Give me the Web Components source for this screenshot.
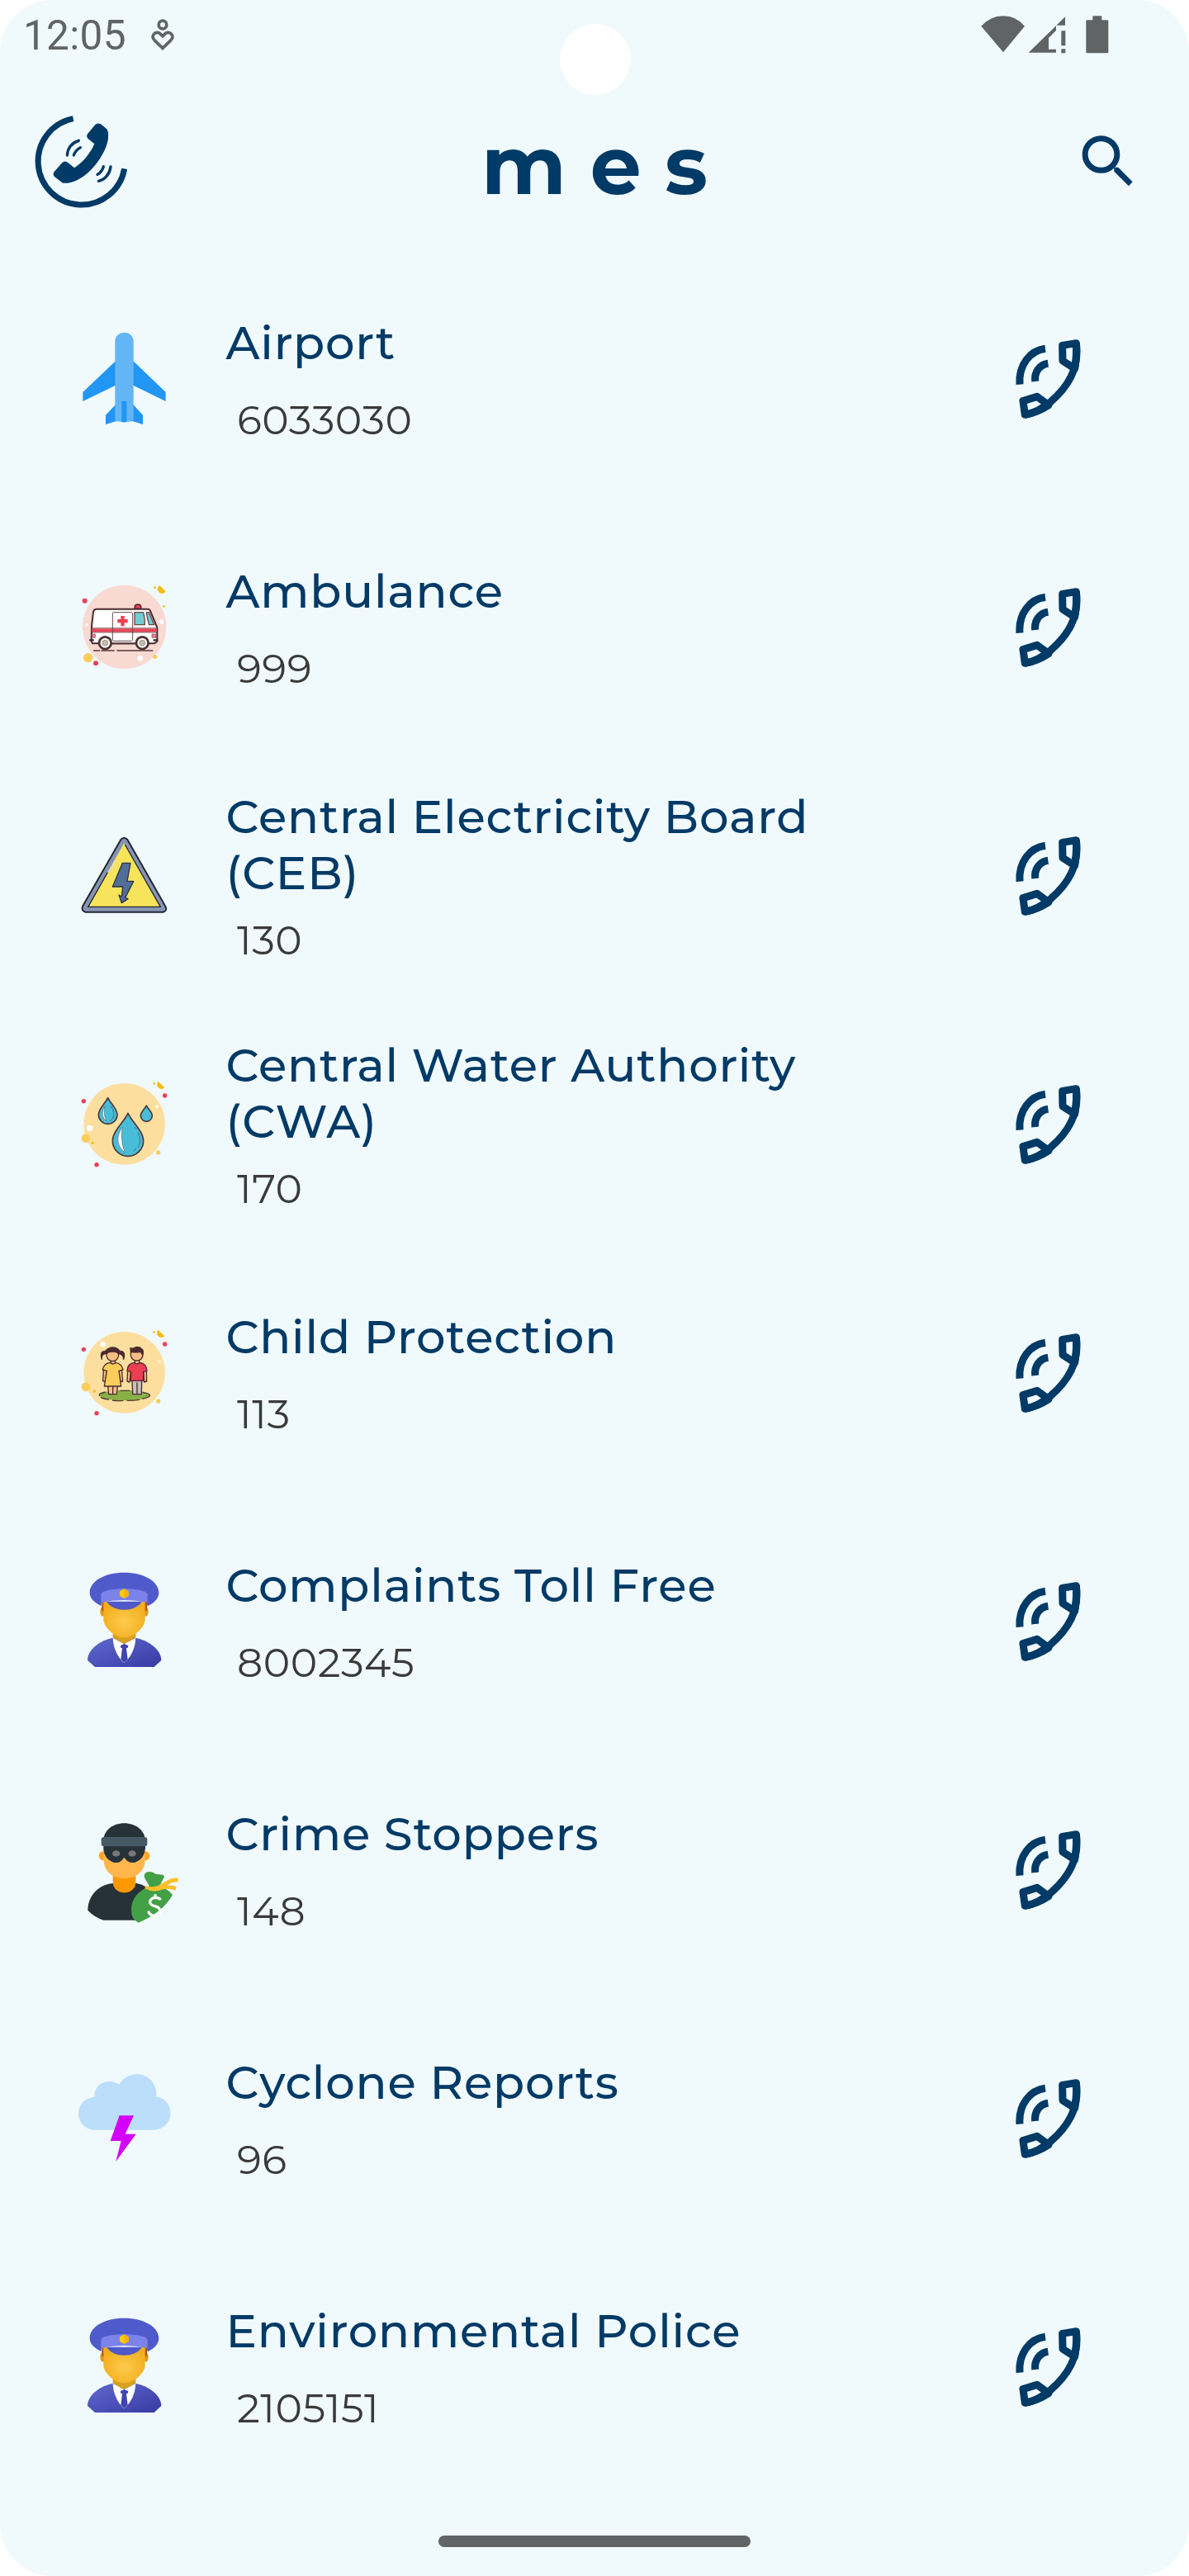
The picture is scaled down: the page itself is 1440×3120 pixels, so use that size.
<!DOCTYPE html>
<html lang="en">
<head>
<meta charset="utf-8">
<title>mes</title>
<style>
html,body{margin:0;background:#fff}
body{font-family:Montserrat,Inter,"Open Sans",sans-serif}
</style>
</head>
<body>
<mes-app></mes-app>
<script>
const NAVY='#003a66';
const dot=(x,y,r,c)=>`<circle cx="${x}" cy="${y}" r="${r}" fill="${c}"/>`;
const officer=`<defs><radialGradient id="f" cx=".5" cy=".55" r=".55"><stop offset="0" stop-color="#ffca4d"/><stop offset="1" stop-color="#f2b01f"/></radialGradient><linearGradient id="b" x1="0" y1="0" x2="1" y2="1"><stop offset="0" stop-color="#6069cd"/><stop offset="1" stop-color="#373ba5"/></linearGradient></defs>
<path d="M170 281C125 290 78 322 78 363L105 387H320L346 363C346 322 297 290 253 281Z" fill="url(#b)"/>
<path d="M170 281L211 303L253 281C252 320 233 355 211 372C190 355 171 320 170 281Z" fill="#fff"/>
<path d="M198 309L211 303L226 309L224 318H219L224 360L211 371L199 360L204 318H199Z" fill="#3f44ae"/>
<path d="M170 260H253V280Q234 293 211 303Q189 293 170 280Z" fill="#d8a01c"/>
<ellipse cx="133" cy="186" rx="9" ry="17" fill="#d99a18"/><ellipse cx="290" cy="186" rx="9" ry="17" fill="#d99a18"/>
<path d="M130 145H145V178L136 186L130 180ZM278 145H294V180L288 186L278 165Z" fill="#bf4f16"/>
<path d="M136 150H287V215C287 240 249 280 211 280C174 280 136 240 136 215Z" fill="url(#f)"/>
<path d="M127 165C98 150 86 135 86 117C86 75 140 44 211 44S337 75 337 117C337 135 325 152 296 166L290 140H132Z" fill="#4f5acb"/>
<path d="M147 149H276C263 169 239 179 211 179S160 169 147 149Z" fill="#5059c8"/>
<path d="M127 123C127 110 170 103 211 103S296 110 296 123V153Q254 144 211 144T127 153Z" fill="#7b83eb"/>
<path d="M211 103L227 112V129L211 138L195 129V112Z" fill="#fcca05"/><path d="M211 103L227 112V129L211 138Z" fill="#f5b400"/>`;
const drop=(x,t,b,w)=>{const h=b-t;return `M${x} ${t}C${x-w*.25} ${t+h*.2} ${x-w} ${t+h*.42} ${x-w} ${b-w}A${w} ${w} 0 0 0 ${x+w} ${b-w}C${x+w} ${t+h*.42} ${x+w*.25} ${t+h*.2} ${x} ${t}Z`};
const ICONS={
airport:['30 42 450 450',`<path d="M210 202L91 315V348L210 290H274L392 348V315L274 202ZM210 360L174 398V432L210 421H274L309 432V398L274 360Z" fill="#2196f3"/><path d="M208 131C208 110 224 98 241.500 98S275 110 275 131V418Q241 429 208 418Z" fill="#64b5f6"/><path d="M232 348H250V424H232Z" fill="#2196f3"/>`],
ambulance:['0 15 450 450',dot(212,238,152,'#f8dad2')+dot(68,143,9,'#ee3e54')+dot(76,230,5,'#fff')+dot(80,350,17,'#fbcd59')+dot(108,370,9,'#ee3e54')+dot(269,352,10,'#fff')+dot(323,346,8,'#fbcd59')+dot(347,219,8,'#fff')+dot(355,163,4,'#f4bc1a')+dot(323,95,4,'#f4bc1a')+
`<path d="M340 87L362 109A16 16 0 1 1 340 87Z" fill="#f4bc1a"/>
<path d="M101 324H122M129 324H174M186 324H314" stroke="#56373b" stroke-width="5" stroke-linecap="round"/>
<path d="M250 172V165Q250 156 261 156T272 165V172Z" fill="#ee3e54" stroke="#4b2b2f" stroke-width="5"/>
<path d="M110 173H299Q304 174 306 180L331 240V290L322 298H96L92 290L93 235L99 183Q101 174 110 173Z" fill="#fff" stroke="#4b2b2f" stroke-width="6" stroke-linejoin="round"/>
<path d="M94 244H330V257H94Z" fill="#e7485c"/><path d="M96 242H329M96 258H329" stroke="#5b3035" stroke-width="2"/>
<path d="M249 185H280Q287 202 286 230H249Z" fill="#74cbd2" stroke="#6d484a" stroke-width="4"/><path d="M292 185H301L320 230H302Q295 210 292 185Z" fill="#74cbd2" stroke="#6d484a" stroke-width="4"/>
<path d="M171 185H239L242 188V286L239 289H171L169 286V188Z" fill="none" stroke="#694b4d" stroke-width="3"/>
<path d="M199 198H212V210H224V223H212V235H199V223H187V210H199Z" fill="#ee3e54"/>
<path d="M94 264H106V277H94ZM312 264H327V277H312Z" fill="#f17f91" stroke="#734b52" stroke-width="2"/>
<path d="M85 286H101M317 286H334" stroke="#35252a" stroke-width="7"/><path d="M166 301H252" stroke="#8e7a79" stroke-width="3"/>`+[142,277].map(x=>dot(x,296,26,'#493033')+dot(x,296,18,'#f7f3ef')+`<circle cx="${x}" cy="296" r="10" fill="#c7beaf" stroke="#837a70" stroke-width="2"/>`).join('')],
power:['0 -12 450 450',`<path d="M199 81Q211 67 223 81L361 323Q369 339 352 344H71Q55 340 60 323Z" fill="#8795b3" stroke="#242834" stroke-width="6" stroke-linejoin="round"/><path d="M211 94L343 325H80Z" fill="#f8e45b"/><path d="M214 99L343 325H80L151 200" fill="none" stroke="#242834" stroke-width="4"/><path d="M153 199L166 189L173 164L184 154" stroke="#ddd" stroke-width="4" fill="none"/><path d="M205 166H234L222 232H245L215 292L225 296L202 311L192 282L202 288L206 252H169Z" fill="#536d99" stroke="#293345" stroke-width="4" stroke-linejoin="round"/>`],
water:['0 -9 450 450',dot(212,214,148,'#fcdf9f')+dot(64,131,8,'#ee3e54')+dot(359,111,8,'#ee3e54')+dot(111,362,8,'#ee3e54')+dot(86,229,11,'#fff')+dot(72,266,16,'#fbcd59')+dot(96,283,5,'#f4bc1a')+dot(335,318,8,'#fbcd59')+dot(331,151,5,'#fff')+dot(320,67,4,'#f4bc1a')+`<path d="M335 59L358 82A15 15 0 1 1 335 59Z" fill="#f4bc1a"/><g fill="#49bcd8" stroke="#4a383b" stroke-width="5" stroke-linejoin="round"><path d="${drop(152,119,214,34)}"/><path d="${drop(292,147,205,21)}"/><path d="${drop(225,175,331,56)}"/></g><path d="M141 149Q125 174 138 196L147 202Q134 181 141 149ZM205 226C182 257 182 295 215 318C203 294 199 260 205 226Z" fill="#fff" stroke="#5a6970" stroke-width="2"/><path d="M163 148Q180 175 168 196L159 203M249 225L257 233M262 245Q275 276 262 300M255 301L246 313" fill="none" stroke="#45717c" stroke-width="3"/>`],
child:['0 -6 450 450',dot(212,217,148,'#fcdf9f')+dot(64,133,8,'#ee3e54')+dot(359,114,8,'#ee3e54')+dot(111,365,8,'#ee3e54')+dot(134,115,10,'#fff')+dot(72,269,16,'#fbcd59')+dot(103,285,5,'#f4bc1a')+dot(335,321,8,'#fbcd59')+dot(339,178,4,'#fff')+dot(320,70,4,'#f4bc1a')+`<path d="M335 62L358 85A15 15 0 1 1 335 62Z" fill="#f4bc1a"/><ellipse cx="213" cy="300" rx="92" ry="19" fill="#88b047"/><path d="M144 288Q115 294 122 302M126 307Q136 313 156 315M168 318Q190 321 208 319M221 319Q247 319 267 316M277 313Q300 308 305 301Q306 294 278 289M196 283H232" fill="none" stroke="#4c382d" stroke-width="4"/>
<g stroke="#4b2b2f" stroke-width="4" stroke-linejoin="round"><path d="M152 265H187L184 296H155Z" fill="#f7bd87"/><path d="M170 267V294"/><path d="M136 207L134 248L143 251L149 207ZM202 207L206 249L198 251L190 207Z" fill="#f7bd87"/><path d="M161 181Q138 182 133 207L148 211L139 267H200L192 211L207 207Q202 184 179 181Q170 188 161 181Z" fill="#fbcd59"/><path d="M163 170V183Q170 189 178 183V170Z" fill="#f7bd87"/><ellipse cx="169" cy="154" rx="22" ry="22" fill="#f7bd87"/><path d="M148 149Q127 148 130 169Q121 139 143 139Q155 126 170 126T195 139Q218 138 209 169Q208 149 190 149Q185 141 169 141T148 149Z" fill="#4b2b2f"/>
<path d="M240 245H275L274 296H242Z" fill="#c5c0b8"/><path d="M258 253V295"/><path d="M224 208L222 249L231 252L236 208ZM281 208L284 252L293 249L292 208Z" fill="#f7bd87"/><path d="M248 181Q223 183 222 211L236 214L235 247H281V214L294 211Q292 184 268 181Q258 189 248 181Z" fill="#ee3e54"/><path d="M250 170V182Q258 189 266 182V170Z" fill="#f7bd87"/><ellipse cx="257" cy="153" rx="22" ry="21" fill="#f7bd87"/><path d="M235 146L234 128L243 130Q263 118 277 133Q283 140 278 154L272 142Q253 146 235 141Z" fill="#4b2b2f"/></g>`],
officer:['0 -3 450 450',officer],
thief:['0 0 450 450',`<path d="M170 273C118 278 79 318 79 371Q101 395 136 407H250V275Z" fill="#263238"/><path d="M170 240H253V268C253 293 234 307 212 307S170 293 170 268Z" fill="#ff9800"/><circle cx="136" cy="173" r="17" fill="#ffa726"/><circle cx="287" cy="173" r="17" fill="#ffa726"/><path d="M137 130H287V190C287 231 251 256 212 256S137 231 137 190Z" fill="#ffb74d"/><path d="M136 120C136 81 169 55 211 55S288 81 288 120V146Q284 185 251 197Q228 203 211 179Q196 203 172 197Q139 185 136 150Z" fill="#263238"/><path d="M253 272Q275 276 290 286L260 330H240Z" fill="#263238"/><rect x="128" y="105" width="167" height="34" rx="10" fill="#455a64"/><ellipse cx="182" cy="165" rx="14" ry="11" fill="#78777a"/><ellipse cx="240" cy="165" rx="14" ry="11" fill="#78777a"/>
<path d="M301 280L285 253Q280 231 305 231Q317 231 325 239L352 242Q360 246 354 255L340 283Q370 294 387 315Q351 379 263 416Q235 405 237 364C239 327 265 298 301 286Z" fill="#43a047"/><path d="M287 281Q311 291 335 281L367 263Q388 250 408 255L406 269Q386 267 367 281Q385 279 401 284L398 299Q365 288 339 299Q310 306 288 292Z" fill="#fbc02d"/><path d="M344 333Q337 325 325 325Q308 326 305 339Q304 352 322 356Q345 361 341 378Q335 393 319 391Q303 389 299 374M324 313V325M319 391L316 402" fill="none" stroke="#fff" stroke-width="10"/>`],
cyclone:['0 3 450 450',`<path d="M100 269C68 266 45 241 45 209S70 152 103 150C101 118 125 93 156 93Q178 93 193 105C205 82 229 67 257 67C300 67 333 104 328 149C359 151 379 177 379 209S354 266 323 269Z" fill="#bbdefb"/><path d="M194 217H246L215 284H254L181 384L200 309H161Z" fill="#d500f9"/>`],
call:['0 0 420 420',`<g fill="none" stroke="${NAVY}" stroke-width="27" stroke-linejoin="round"><path d="M198 97C143 104 100 155 105 227M208 151C178 155 157 181 161 216"/><path d="M260 85L310 77Q313 120 305 169L261 141Z"/><path d="M117 287L168 271L210 302Q172 328 124 337Z"/><path d="M310 77C322 170 280 236 215 292C181 320 148 334 124 337"/></g>`],
logo:['0 0 390 390',`<g transform="translate(-105 -395)"><path d="M266 430A158 158 0 1 0 452 612" fill="none" stroke="${NAVY}" stroke-width="21"/><path d="M343 522L319 502Q311 492 321 482L346 452Q355 444 366 450L388 468Q395 476 393 500C389 556 319 655 247 664H228L199 642Q190 634 197 623L226 590Q236 581 247 590L270 609C299 592 330 554 343 522Z" fill="${NAVY}"/><path d="M286 510C261 518 246 538 244 563M292 535Q274 544 268 563M376 604Q370 624 354 633M402 605C399 630 382 652 358 657" fill="none" stroke="${NAVY}" stroke-width="10" stroke-linecap="round"/></g>`],
search:['0 0 210 210',`<circle cx="79.500" cy="81" r="58" fill="none" stroke="${NAVY}" stroke-width="21"/><path d="M127 128H142L194 181L180 196L127 143Z" fill="${NAVY}"/>`],
buddy:['0 0 90 120',`<g fill="none" stroke="#606464" stroke-width="11"><circle cx="45" cy="24" r="14.500"/><path d="M45 109L15 80C1 64 17 46 34 55L45 65L56 55C73 46 89 64 75 80Z"/></g>`],
status:['0 0 480 140',`<g fill="#606464"><path d="M4 38Q37 1 84 1T162 38L84 133Z"/><path d="M176 134L309 4V35H276V54L249 81V122H276V134Z"/><path d="M295 55H310V109H295ZM295 121H310V136H295ZM409 1H442V16H463Q466 16 466 19V133Q466 136 463 136H388Q385 136 385 133V19Q385 16 388 16H409Z"/></g>`]
};
class MesIcon extends HTMLElement{
  connectedCallback(){
    const [box,art]=ICONS[this.getAttribute('name')];
    this.attachShadow({mode:'open'}).innerHTML=`<style>:host{display:block;flex:none}svg{display:block;width:100%;height:100%}</style><svg viewBox="${box}" aria-hidden="true">${art}</svg>`;
  }
}
class StatusBar extends HTMLElement{
  connectedCallback(){
    this.attachShadow({mode:'open'}).innerHTML=`<style>
    :host{display:flex;height:88px;box-sizing:border-box;padding:18px 93px 0 28px;color:#606464;position:relative}
    time{width:154px;font:400 49.500px/50px Roboto,sans-serif;letter-spacing:.3px}
    .b{width:30px;height:40px;margin-top:4px}.s{width:160px;height:46.67px;margin-left:auto;margin-top:.7px}
    i{position:absolute;left:677.500px;top:29px;width:86px;height:86px;border-radius:50%;background:#fff}</style>
    <time>12:05</time><mes-icon class="b" name="buddy"></mes-icon><mes-icon class="s" name="status"></mes-icon><i></i>`;
  }
}
class AppHeader extends HTMLElement{
  connectedCallback(){
    this.attachShadow({mode:'open'}).innerHTML=`<style>
    :host{display:flex;height:221px;box-sizing:border-box;padding:43.667px 63px 0 35px;color:${NAVY}}
    .l{width:130px;height:130px}.s{width:70px;height:70px;margin:28.200px 0 0 auto}
    h1{margin:20px 0 0 418px;font-size:98px;line-height:96px;font-weight:700;letter-spacing:28.500px}</style>
    <mes-icon class="l" name="logo"></mes-icon><h1>mes</h1><mes-icon class="s" name="search"></mes-icon>`;
  }
}
class ContactRow extends HTMLElement{
  connectedCallback(){
    const lines=this.getAttribute('label').split('|'),two=lines.length>1;
    this.attachShadow({mode:'open'}).innerHTML=`<style>
    :host{display:flex;height:301px;box-sizing:border-box;padding:0 100px 0 80px}
    .i{width:150px;height:150px;margin-top:75px}.c{width:140px;height:140px;margin-top:81px}
    .t{flex:1;margin-left:43.500px;padding-top:${two?44:72}px}
    h2{margin:0;color:${NAVY};font-size:56px;line-height:68px;font-weight:500;letter-spacing:.78px;white-space:nowrap}
    p{margin:${two?18:30}px 0 0 13.500px;color:#3a3a3a;font-size:49px;line-height:60px;font-weight:400;letter-spacing:.5px}</style>
    <mes-icon class="i" name="${this.getAttribute('icon')}"></mes-icon>
    <div class="t"><h2>${lines.join('<br>')}</h2><p>${this.getAttribute('number')}</p></div>
    <mes-icon class="c" name="call"></mes-icon>`;
  }
}
const CONTACTS=[
['airport','Airport','6033030'],
['ambulance','Ambulance','999'],
['power','Central Electricity Board|(CEB)','130'],
['water','Central Water Authority|(CWA)','170'],
['child','Child Protection','113'],
['officer','Complaints Toll Free','8002345'],
['thief','Crime Stoppers','148'],
['cyclone','Cyclone Reports','96'],
['officer','Environmental Police','2105151']];
class MesApp extends HTMLElement{
  connectedCallback(){
    this.attachShadow({mode:'open'}).innerHTML=`<style>
    :host{display:flex;flex-direction:column;width:1440px;height:3120px;background:#f0f9fc;border-radius:63px;overflow:hidden}
    main{flex:1}footer{height:49px;display:flex;justify-content:center;align-items:flex-start}
    footer i{width:378px;height:14px;border-radius:7px;background:#606464}</style>
    <status-bar></status-bar><app-header></app-header>
    <main>${CONTACTS.map(([icon,label,n])=>`<contact-row icon="${icon}" label="${label}" number="${n}"></contact-row>`).join('')}</main>
    <footer><i></i></footer>`;
  }
}
customElements.define('mes-icon',MesIcon);
customElements.define('status-bar',StatusBar);
customElements.define('app-header',AppHeader);
customElements.define('contact-row',ContactRow);
customElements.define('mes-app',MesApp);
</script>
</body>
</html>
